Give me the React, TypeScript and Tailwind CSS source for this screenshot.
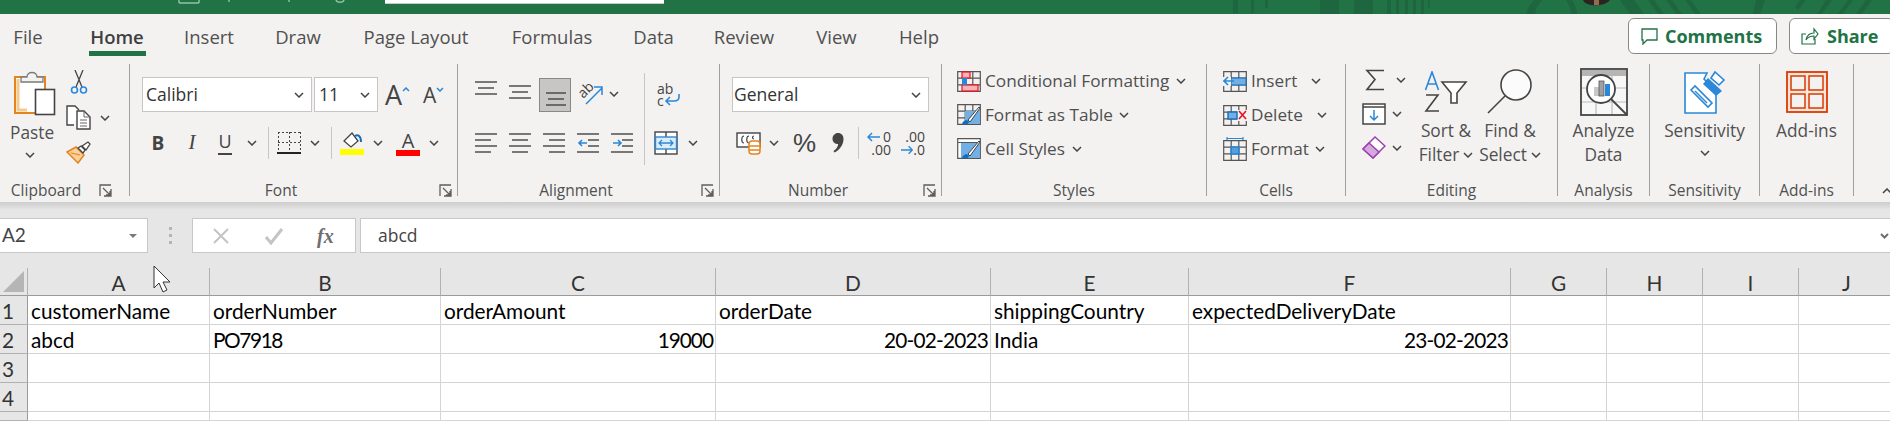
import React from "react";

const UI = "font-['Open_Sans',sans-serif]";
const CELL = "font-['Lato',sans-serif]";

function Chev({ className = "" }: { className?: string }) {
  return (
    <svg width="10" height="6" viewBox="0 0 10 6" className={`shrink-0 ${className}`}>
      <path d="M1 1l4 4 4-4" fill="none" stroke="#444" strokeWidth="1.5" />
    </svg>
  );
}

function Launcher() {
  return (
    <svg width="13" height="13" viewBox="0 0 13 13" className="shrink-0">
      <path d="M1 12V1h11M12 5v7H5M4 4l7 7M11 7v4H7" fill="none" stroke="#605e5c" strokeWidth="1.3" />
    </svg>
  );
}

function Group({ width, label, launcher, labelPad = "", children }: { width: string; label: string; launcher?: boolean; labelPad?: string; children: React.ReactNode }) {
  return (
    <div className={`${width} shrink-0 h-[132px] flex flex-col border-r border-[#a19f9d]`}>
      <div className="h-[120px] flex">{children}</div>
      <div className={`h-[12px] flex items-center ${labelPad}`}>
        <span className="flex-1 text-center text-[15.5px] leading-[16px] text-[#505050]">{label}</span>
        {launcher && <span className="w-[25px] pr-[5px] flex justify-end"><Launcher /></span>}
      </div>
    </div>
  );
}

function Lines({ widths, blue }: { widths: [number, number][]; blue?: "left" | "right" }) {
  return (
    <svg width="23" height="23" viewBox="0 0 23 23" className="shrink-0">
      {widths.map(([x, w], i) => (
        <path key={i} d={`M${x} ${2 + i * 6}h${w}`} stroke="#444" strokeWidth="1.4" />
      ))}
      {blue === "left" && <path d="M10 11H2m3-3l-3 3 3 3" fill="none" stroke="#2b88d8" strokeWidth="1.6" />}
      {blue === "right" && <path d="M2 11h8m-3-3l3 3-3 3" fill="none" stroke="#2b88d8" strokeWidth="1.6" />}
    </svg>
  );
}

function PasteIcon() {
  return (
    <svg width="42" height="46" viewBox="0 0 42 46" className="shrink-0">
      <rect x="1" y="7" width="30" height="36" fill="#fff" stroke="#e3851e" strokeWidth="2" />
      <path d="M4 9v31h9" fill="none" stroke="#f6c98c" strokeWidth="3" />
      <path d="M7 12V7h6c0-6 10-6 10 0h6v5z" fill="#f3f2f1" stroke="#7a7a7a" strokeWidth="1.3" />
      <rect x="21.5" y="19.5" width="19" height="25" fill="#fff" stroke="#444" strokeWidth="1.6" />
    </svg>
  );
}

function Scissors() {
  return (
    <svg width="18" height="25" viewBox="0 0 18 25" className="shrink-0">
      <path d="M5 0l7 17M13 0L6 17" stroke="#444" strokeWidth="1.3" fill="none" />
      <circle cx="4.5" cy="20" r="3" fill="none" stroke="#2b88d8" strokeWidth="1.6" />
      <circle cx="13.5" cy="20" r="3" fill="none" stroke="#2b88d8" strokeWidth="1.6" />
    </svg>
  );
}

function CopyIcon() {
  return (
    <svg width="25" height="25" viewBox="0 0 25 25" className="shrink-0">
      <path d="M8 20H1V1h8l4 4" fill="#fff" stroke="#444" strokeWidth="1.4" />
      <path d="M11 6h7l6 6v12H11z" fill="#fff" stroke="#444" strokeWidth="1.4" />
      <path d="M14 15h7M14 18h7M14 21h7M18 6v6h6" fill="none" stroke="#666" strokeWidth="1" />
    </svg>
  );
}

function BrushIcon() {
  return (
    <svg width="25" height="23" viewBox="0 0 25 23" className="shrink-0">
      <path d="M1 11l9-5 8 8-6 8z" fill="#fbd09a" stroke="#e3851e" strokeWidth="1.5" />
      <path d="M5 12l9 2" stroke="#e3851e" strokeWidth="1.2" />
      <path d="M12 7l3-2 4 4-2 3zM16 5l6-4 2 2-4 6z" fill="#fff" stroke="#444" strokeWidth="1.3" />
    </svg>
  );
}

function FillIcon() {
  return (
    <svg width="24" height="25" viewBox="0 0 24 25" className="shrink-0">
      <path d="M4 10l8-8 6 8-7 6z" fill="#fff" stroke="#444" strokeWidth="1.3" />
      <path d="M15 5c3-2 6 0 6 6" fill="none" stroke="#106ebe" strokeWidth="2" />
      <rect x="0" y="18" width="24" height="6" fill="#ffff00" />
    </svg>
  );
}

function BordersIcon() {
  return (
    <svg width="24" height="24" viewBox="0 0 24 24" className="shrink-0" shapeRendering="crispEdges">
      <path d="M1 1h22M1 1v20M23 1v20M12 1v20M1 11h22" fill="none" stroke="#444" strokeWidth="1" strokeDasharray="2 2" />
      <path d="M0 22h24" stroke="#222" strokeWidth="2" />
    </svg>
  );
}

function OrientIcon() {
  return (
    <span className="relative w-[27px] h-[24px] block shrink-0">
      <span className="block -rotate-45 w-[18px] text-[14px] leading-[14px] text-[#444]">ab</span>
      <svg width="27" height="24" viewBox="0 0 27 24" className="absolute inset-0">
        <path d="M9 22L25 6M17 5h8v8" fill="none" stroke="#2b88d8" strokeWidth="1.5" />
      </svg>
    </span>
  );
}

function WrapIcon() {
  return (
    <span className="relative w-[24px] h-[24px] flex flex-col shrink-0 text-[14px] leading-[12px] text-[#444]">
      <span>ab</span>
      <span>c</span>
      <svg width="24" height="24" viewBox="0 0 24 24" className="absolute inset-0">
        <path d="M22 11v3c0 3-2 4-5 4H10m3-4l-4 4 4 4" fill="none" stroke="#2b88d8" strokeWidth="1.6" />
      </svg>
    </span>
  );
}

function MergeIcon() {
  return (
    <svg width="24" height="24" viewBox="0 0 24 24" className="shrink-0">
      <rect x="1" y="1" width="22" height="22" fill="#fff" stroke="#444" strokeWidth="1.4" />
      <path d="M12 1v5M12 18v5" stroke="#444" strokeWidth="1.4" />
      <rect x="1.5" y="6" width="21" height="12" fill="#dcecf9" stroke="#2b88d8" strokeWidth="1.4" />
      <path d="M5 12h14M8 9l-3 3 3 3M16 9l3 3-3 3" fill="none" stroke="#2b88d8" strokeWidth="1.3" />
    </svg>
  );
}

function AccountingIcon() {
  return (
    <svg width="25" height="24" viewBox="0 0 25 24" className="shrink-0">
      <rect x="1" y="2" width="23" height="14" fill="#fff" stroke="#444" strokeWidth="1.4" />
      <path d="M8 5c-3 0-3 7 0 7M13 5c-3 0-3 7 0 7M18 5c-2 0-2 3 0 3" fill="none" stroke="#444" strokeWidth="1.2" />
      <rect x="13" y="10" width="11" height="13" rx="3" fill="#fff" stroke="#e3851e" strokeWidth="1.5" />
      <path d="M13 15h11M13 19h11" stroke="#e3851e" strokeWidth="1.3" />
    </svg>
  );
}

function CommaIcon() {
  return (
    <svg width="12" height="20" viewBox="0 0 12 20" className="shrink-0">
      <path d="M6 0c3.500 0 5.500 2.500 5.500 6 0 6-4 11-9 13.500L1.500 18c3-2 4.500-4.500 4.700-7C3 11 .5 9 .5 5.700.5 2.500 3 0 6 0z" fill="#444" />
    </svg>
  );
}

function DecimalIcon({ inc }: { inc?: boolean }) {
  return (
    <span className="w-[24px] h-[26px] flex flex-col shrink-0 text-[14px] leading-[13px] text-[#444] text-right">
      {inc ? (
        <>
          <span className="flex justify-between items-center h-[13px]">
            <svg width="13" height="10" viewBox="0 0 13 10"><path d="M13 5H1m4-4L1 5l4 4" fill="none" stroke="#2b88d8" strokeWidth="1.5" /></svg>
            <span>0</span>
          </span>
          <span className="h-[13px]">.00</span>
        </>
      ) : (
        <>
          <span className="h-[13px]">.00</span>
          <span className="flex justify-between items-center h-[13px]">
            <svg width="13" height="10" viewBox="0 0 13 10"><path d="M0 5h12M8 1l4 4-4 4" fill="none" stroke="#2b88d8" strokeWidth="1.5" /></svg>
            <span>.0</span>
          </span>
        </>
      )}
    </span>
  );
}

function TableGrid() {
  return <path d="M.7.7h22.6v19.6H.7zM.7 7.2h22.6M.7 13.8h22.6M8.2.7v19.6M15.8.7v19.6" fill="none" stroke="#555" strokeWidth="1.2" />;
}

function CondFormatIcon() {
  return (
    <svg width="24" height="21" viewBox="0 0 24 21" className="shrink-0">
      <TableGrid />
      <rect x="5" y="1" width="8" height="6" fill="#f8b4b4" stroke="#e81123" strokeWidth="1.2" />
      <rect x="5" y="14" width="16" height="6" fill="#f8b4b4" stroke="#e81123" strokeWidth="1.2" />
      <rect x="5" y="7" width="5" height="7" fill="#2b88d8" />
    </svg>
  );
}

function TableBrush() {
  return (
    <>
      <path d="M5 20c1-3 3-4 5-4l2 2c0 2-3 3-7 2z" fill="#106ebe" />
      <path d="M11 16l11-13 1 1-10 14z" fill="#fff" stroke="#444" strokeWidth="1" />
    </>
  );
}

function FormatTableIcon() {
  return (
    <svg width="24" height="22" viewBox="0 0 24 22" className="shrink-0">
      <TableGrid />
      <rect x="8" y="7" width="15" height="13" fill="#71afe5" />
      <TableBrush />
    </svg>
  );
}

function CellStylesIcon() {
  return (
    <svg width="24" height="22" viewBox="0 0 24 22" className="shrink-0">
      <path d="M.7.7h22.6v19.6H.7zM.7 4.500h22.6" fill="#fff" stroke="#555" strokeWidth="1.2" />
      <rect x="4" y="5" width="19" height="15" fill="#71afe5" />
      <TableBrush />
    </svg>
  );
}

function InsertIcon() {
  return (
    <svg width="24" height="21" viewBox="0 0 24 21" className="shrink-0">
      <TableGrid />
      <rect x="8" y="7" width="15" height="7" fill="#71afe5" stroke="#106ebe" />
      <rect x="0" y="6" width="8" height="9" fill="#f3f2f1" />
      <path d="M11 10H1m4-4l-4 4 4 4" fill="none" stroke="#2b88d8" strokeWidth="1.6" />
    </svg>
  );
}

function DeleteIcon() {
  return (
    <svg width="24" height="21" viewBox="0 0 24 21" className="shrink-0">
      <TableGrid />
      <rect x="14" y="5" width="10" height="11" fill="#f3f2f1" />
      <rect x="5" y="7" width="9" height="7" fill="#71afe5" stroke="#106ebe" strokeWidth="1.4" />
      <path d="M16 6l7 8M23 6l-7 8" stroke="#e81123" strokeWidth="1.6" />
    </svg>
  );
}

function FormatCellIcon() {
  return (
    <svg width="24" height="24" viewBox="0 0 24 24" className="shrink-0">
      <g transform="translate(0 3)"><TableGrid /><rect x="7" y="6" width="10" height="9" fill="#2b88d8" opacity=".8" /></g>
      <path d="M4 1.500h16M4 0v3M20 0v3" fill="none" stroke="#2b88d8" strokeWidth="1.2" />
    </svg>
  );
}

function SigmaIcon() {
  return (
    <svg width="20" height="23" viewBox="0 0 20 23" className="shrink-0">
      <path d="M19 1.500H2l8 9-8 10h17" fill="none" stroke="#444" strokeWidth="1.6" />
    </svg>
  );
}

function FillDownIcon() {
  return (
    <svg width="24" height="22" viewBox="0 0 24 22" className="shrink-0">
      <rect x="1" y="1" width="22" height="20" fill="#fff" stroke="#444" strokeWidth="1.5" />
      <path d="M1 4h22" stroke="#444" strokeWidth="1.5" />
      <path d="M12 7v10M8 13l4 4 4-4" fill="none" stroke="#2b88d8" strokeWidth="1.5" />
    </svg>
  );
}

function EraserIcon() {
  return (
    <svg width="24" height="24" viewBox="0 0 24 24" className="shrink-0">
      <path d="M1 13L13 1l10 9-12 12z" fill="#fff" stroke="#9c3fb0" strokeWidth="1.5" />
      <path d="M1 13l6-6 10 9-6 6z" fill="#d6a9de" stroke="#9c3fb0" strokeWidth="1.5" />
    </svg>
  );
}

function SortIcon() {
  return (
    <svg width="44" height="42" viewBox="0 0 44 42" className="shrink-0">
      <path d="M1.500 19L8 1l6.500 18M4 13h8" fill="none" stroke="#2b88d8" strokeWidth="1.6" />
      <path d="M2 24h12L2 40h13" fill="none" stroke="#444" strokeWidth="1.6" />
      <path d="M18 11h24l-9 11v10h-6V22z" fill="#fff" stroke="#444" strokeWidth="1.6" />
    </svg>
  );
}

function FindIcon() {
  return (
    <svg width="46" height="46" viewBox="0 0 46 46" className="shrink-0">
      <circle cx="29" cy="16" r="15" fill="#fbfbfb" stroke="#444" strokeWidth="1.6" />
      <path d="M18 27L1 44" stroke="#444" strokeWidth="1.6" />
    </svg>
  );
}

function AnalyzeIcon() {
  return (
    <svg width="48" height="48" viewBox="0 0 48 48" className="shrink-0">
      <rect x="1" y="1" width="46" height="46" fill="#f7f7f7" stroke="#444" strokeWidth="1.8" />
      <rect x="2" y="2" width="44" height="6" fill="#b5b5b5" />
      <path d="M2 20h44M2 34h44M16 8v38M32 8v38" stroke="#bbb" strokeWidth="1.2" />
      <circle cx="21" cy="21" r="14" fill="#fff" stroke="#444" strokeWidth="1.8" />
      <path d="M31 31l16 16" stroke="#444" strokeWidth="1.8" />
      <rect x="14" y="19" width="5" height="9" fill="#c8c8c8" />
      <rect x="19" y="13" width="5" height="15" fill="#a0a0a0" stroke="#555" strokeWidth=".8" />
      <rect x="25" y="16" width="5" height="12" fill="#2b88d8" />
    </svg>
  );
}

function SensitivityIcon() {
  return (
    <svg width="42" height="44" viewBox="0 0 42 44" className="shrink-0">
      <path d="M1 3h22l-3 6 12 12v22H1z" fill="#fff" stroke="#2b88d8" strokeWidth="1.6" />
      <path d="M7 20l4-4 17 17-4 4z" fill="#fff" stroke="#2b88d8" strokeWidth="1.6" />
      <path d="M11 21l12 12" stroke="#2b88d8" strokeWidth="1.4" />
      <path d="M19 14l5-6 14 13-6 5z" fill="#2b88d8" />
      <path d="M27 8l4-6 9 8-5 5z" fill="#fff" stroke="#2b88d8" strokeWidth="1.6" />
    </svg>
  );
}

function AddinsIcon() {
  return (
    <svg width="42" height="42" viewBox="0 0 42 42" className="shrink-0">
      <rect x="1" y="1" width="40" height="40" fill="#f9e5dd" stroke="#d83b01" strokeWidth="1.8" />
      <rect x="5" y="5" width="14" height="14" fill="#f3f2f1" stroke="#d83b01" strokeWidth="1.500" />
      <rect x="23" y="5" width="14" height="14" fill="#f3f2f1" stroke="#d83b01" strokeWidth="1.500" />
      <rect x="5" y="23" width="14" height="14" fill="#f3f2f1" stroke="#d83b01" strokeWidth="1.500" />
      <rect x="23" y="23" width="14" height="14" fill="#f3f2f1" stroke="#d83b01" strokeWidth="1.500" />
    </svg>
  );
}

function SelectBox({ width, value, pad = "pl-[3px]" }: { width: string; value: string; pad?: string }) {
  return (
    <div className={`${width} h-[35px] bg-white border border-[#c8c6c4] flex items-center justify-between ${pad} pr-[7px] shrink-0 text-[17.5px] text-[#333]`}>
      <span>{value}</span>
      <Chev />
    </div>
  );
}

function StyleRow({ icon, label, chevGap }: { icon: React.ReactNode; label: string; chevGap: string }) {
  return (
    <div className="h-[34px] flex items-center">
      <span className="w-[24px] flex justify-center">{icon}</span>
      <span className="ml-[4px] text-[17.2px] text-[#505050] whitespace-nowrap">{label}</span>
      <Chev className={chevGap} />
    </div>
  );
}

function BigButton({ width, icon, lines, chev }: { width: string; icon: React.ReactNode; lines: string[]; chev?: boolean }) {
  return (
    <div className={`${width} flex flex-col items-center pt-[3px] text-[17.3px] leading-[24px] text-[#505050]`}>
      <div className="h-[50px] flex items-center justify-center">{icon}</div>
      <div className="mt-[2px] flex flex-col items-center whitespace-nowrap">
        {lines.map((l, i) => (
          <span key={l} className="flex items-center gap-[4px]">
            {l}
            {chev && i === lines.length - 1 && <Chev />}
          </span>
        ))}
      </div>
    </div>
  );
}

const tabs = [
  { label: "File", cls: "w-[56px]" },
  { label: "Home", cls: "w-[122px] font-semibold text-[#3f3f3f]", active: true },
  { label: "Insert", cls: "w-[62px]" },
  { label: "Draw", cls: "w-[116px]" },
  { label: "Page Layout", cls: "w-[120px]" },
  { label: "Formulas", cls: "w-[152px]" },
  { label: "Data", cls: "w-[51px]" },
  { label: "Review", cls: "w-[130px]" },
  { label: "View", cls: "w-[55px]" },
  { label: "Help", cls: "w-[110px]" },
];

const columns = ["A", "B", "C", "D", "E", "F", "G", "H", "I", "J"];

// Lato digits run wider than Calibri's, so number cells get tightened
const rows: { text: string; cls?: string }[][] = [
  [{ text: "customerName" }, { text: "orderNumber" }, { text: "orderAmount" }, { text: "orderDate" }, { text: "shippingCountry" }, { text: "expectedDeliveryDate" }, { text: "" }, { text: "" }, { text: "" }, { text: "" }],
  [
    { text: "abcd" },
    { text: "PO7918", cls: "tracking-[-1.4px]" },
    { text: "19000", cls: "justify-end tracking-[-1px]" },
    { text: "20-02-2023", cls: "justify-end tracking-[-0.8px]" },
    { text: "India" },
    { text: "23-02-2023", cls: "justify-end tracking-[-0.8px]" },
    { text: "" },
    { text: "" },
    { text: "" },
    { text: "" },
  ],
  Array.from({ length: 10 }, () => ({ text: "" })),
  Array.from({ length: 10 }, () => ({ text: "" })),
  Array.from({ length: 10 }, () => ({ text: "" })),
];

function TitleArt() {
  return (
    <svg width="1890" height="14" viewBox="0 0 1890 14" className="absolute inset-0">
      <g fill="none" stroke="#8fc3a6" strokeWidth="1.4">
        <path d="M179 3h20M179 0v3M199 0v3" />
        <path d="M229 0v2M289 0v2" />
        <path d="M336 0c1 3 7 3 8 0" />
      </g>
      <g fill="#1e6640">
        <path d="M1233 0h5v13h-5zM1251 0h3v13h-3zM1265 0h3v8h-3zM1320 0h19v14h-19zM1354 0h19v14h-19zM1387 0h4v14h-4zM1396 0h3v14h-3zM1405 0h3v14h-3zM1413 0h3v14h-3zM1421 0h3v14h-3zM1428 0h2v8h-2z" />
        <path d="M1526 14c2-8 6-12 9-14h8c-4 3-7 8-8 14zM1566 0h6c3 4 5 9 5 14h-6c0-5-2-10-5-14z" />
        <path d="M1620 0h14l10 14h-14zM1648 0h6l10 14h-6zM1666 0h6l10 14h-6zM1685 0h6l10 14h-6zM1753 14l3-14h9l-5 14z" />
        <path d="M1795 7l5-7h6l-8 10zM1817 14l9-14h6l-10 14zM1838 14l10-14h5l-10 14zM1856 14l10-14h6l-10 14z" />
      </g>
      <path d="M1583 0c2 7 22 7 27 0z" fill="#2c2420" />
      <rect x="1594" y="0" width="5" height="5" fill="#9a6a4d" />
      <rect x="385" y="0" width="279" height="3" fill="#fff" />
      <rect x="385" y="3" width="279" height="1" fill="#bcd0c4" />
    </svg>
  );
}

function Ribbon() {
  return (
    <div className={`${UI} h-[188px] bg-[#f3f2f1] flex flex-col`}>
      <div className="h-[50px] flex items-start text-[18.5px] text-[#505050]">
        {tabs.map((t) => (
          <div key={t.label} className={`${t.cls} relative h-[42px] pt-[4px] flex items-center justify-center`}>
            {t.label}
            {t.active && <span className="absolute left-[33px] bottom-0 w-[57px] h-[5px] bg-[#217346]" />}
          </div>
        ))}
        <div className="ml-auto mt-[4px] flex gap-[12px] -mr-[4px]">
          <div className="w-[149px] h-[36px] bg-white border border-[#8a8886] rounded-[6px] flex items-center pl-[12px] gap-[7px] text-[#217346] font-bold text-[18px]">
            <svg width="17" height="17" viewBox="0 0 17 17"><path d="M1 1h15v11H6l-4 4v-4H1z" fill="none" stroke="#217346" strokeWidth="1.3" /></svg>
            Comments
          </div>
          <div className="w-[105px] h-[36px] bg-white border border-[#8a8886] rounded-[6px] flex items-center pl-[11px] gap-[8px] text-[#217346] font-bold text-[18px]">
            <svg width="18" height="18" viewBox="0 0 18 18"><path d="M5 7H1v10h13v-5M5 13c1-5 4-7 8-7V2l4 5-4 5V9c-3 0-6 1-8 4z" fill="none" stroke="#217346" strokeWidth="1.2" /></svg>
            Share
          </div>
        </div>
      </div>
      <div className="h-[132px] flex">
        <Group width="w-[130px]" label="Clipboard" launcher labelPad="pr-[12px]">
          <div className="w-[64px] pl-[14px] pt-[6px] flex flex-col items-start">
            <PasteIcon />
            <span className="-ml-[4px] mt-[5px] text-[17.3px] leading-[24px] text-[#505050]">Paste</span>
            <Chev className="ml-[11px] mt-[7px]" />
          </div>
          <div className="flex flex-col pt-[6px]">
            <span className="ml-[6px] h-[36px]"><Scissors /></span>
            <span className="flex items-center h-[25px] ml-[2px] mt-[-1px]"><CopyIcon /><Chev className="ml-[9px]" /></span>
            <span className="ml-[2px] mt-[11px]"><BrushIcon /></span>
          </div>
        </Group>

        <Group width="w-[328px]" label="Font" launcher>
          <div className="flex flex-col pt-[13px]">
            <div className="flex items-center ml-[12px]">
              <SelectBox width="w-[170px]" value="Calibri" />
              <SelectBox width="w-[64px] ml-[2px]" value="11" pad="pl-[4px]" />
              <span className="ml-[7px] text-[27px] leading-[30px] text-[#444]">A</span>
              <svg width="8" height="5" viewBox="0 0 8 5" className="-mt-[10px]"><path d="M1 4l3-3 3 3" fill="none" stroke="#2b88d8" strokeWidth="1.5" /></svg>
              <span className="ml-[13px] text-[21px] leading-[30px] text-[#444]">A</span>
              <svg width="8" height="5" viewBox="0 0 8 5" className="-mt-[10px]"><path d="M1 1l3 3 3-3" fill="none" stroke="#2b88d8" strokeWidth="1.5" /></svg>
            </div>
            <div className="flex items-center ml-[21px] mt-[15px] h-[32px]">
              <span className="w-[14px] text-[19px] font-bold text-[#444] text-center">B</span>
              <span className="ml-[21px] w-[12px] font-['Liberation_Serif',serif] italic text-[21px] text-[#444] text-center">I</span>
              <span className="ml-[19px] w-[16px] h-[24px] flex flex-col items-center text-[18px] leading-[20px] text-[#444]">U<span className="w-[14px] h-[1.5px] mt-[2px] bg-[#444]" /></span>
              <Chev className="ml-[14px]" />
              <span className="ml-[11px] w-px h-[32px] bg-[#c8c6c4]" />
              <span className="ml-[8px]"><BordersIcon /></span>
              <Chev className="ml-[9px]" />
              <span className="ml-[11px] w-px h-[32px] bg-[#c8c6c4]" />
              <span className="ml-[8px]"><FillIcon /></span>
              <Chev className="ml-[9px]" />
              <span className="ml-[13px] w-[24px] h-[25px] flex flex-col items-center text-[20px] leading-[19px] text-[#444]">A<span className="w-[24px] h-[6px] bg-[#ff0000]" /></span>
              <Chev className="ml-[9px]" />
            </div>
          </div>
        </Group>

        <Group width="w-[262px]" label="Alignment" launcher>
          <div className="flex flex-col pt-[14px]">
            <div className="flex items-start ml-[17px] h-[34px]">
              <span className="mt-[2px]"><Lines widths={[[0, 22], [3, 16], [0, 22]]} /></span>
              <span className="ml-[11px] mt-[6px]"><Lines widths={[[0, 22], [3, 16], [0, 22]]} /></span>
              <span className="ml-[7px] w-[32px] h-[34px] bg-[#c8c6c4] border border-[#8a8886] flex items-start justify-center pt-[12px]">
                <Lines widths={[[2, 20], [4, 16], [2, 20]]} />
              </span>
              <span className="ml-[6px] mt-[4px]"><OrientIcon /></span>
              <Chev className="ml-[5px] mt-[13px]" />
            </div>
            <div className="flex items-center ml-[17px] mt-[18px] h-[26px] gap-[11px]">
              <Lines widths={[[0, 22], [0, 16], [0, 22], [0, 16]]} />
              <Lines widths={[[0, 22], [3, 16], [0, 22], [3, 16]]} />
              <Lines widths={[[0, 22], [6, 16], [0, 22], [6, 16]]} />
              <Lines widths={[[0, 22], [11, 11], [11, 11], [0, 22]]} blue="left" />
              <Lines widths={[[0, 22], [11, 11], [11, 11], [0, 22]]} blue="right" />
            </div>
          </div>
          <span className="ml-[10px] mt-[9px] w-px h-[92px] bg-[#c8c6c4]" />
          <div className="flex flex-col pt-[19px] ml-[12px]">
            <WrapIcon />
            <span className="flex items-center mt-[24px] -ml-[3px]"><MergeIcon /><Chev className="ml-[10px]" /></span>
          </div>
        </Group>

        <Group width="w-[222px]" label="Number" launcher>
          <div className="flex flex-col pt-[13px] pl-[12px]">
            <SelectBox width="w-[197px]" value="General" pad="pl-[1px]" />
            <div className="flex items-center mt-[15px] h-[32px]">
              <span className="ml-[4px]"><AccountingIcon /></span>
              <Chev className="ml-[8px]" />
              <span className="ml-[14px] w-[24px] text-[26px] leading-[28px] text-[#444] font-['Liberation_Sans',sans-serif]">%</span>
              <span className="ml-[15px]"><CommaIcon /></span>
              <span className="ml-[14px] w-px h-[32px] bg-[#c8c6c4]" />
              <span className="ml-[8px]"><DecimalIcon inc /></span>
              <span className="ml-[10px]"><DecimalIcon /></span>
            </div>
          </div>
        </Group>

        <Group width="w-[265px]" label="Styles">
          <div className="flex flex-col pl-[15px]">
            <StyleRow icon={<CondFormatIcon />} label="Conditional Formatting" chevGap="ml-[7px]" />
            <StyleRow icon={<FormatTableIcon />} label="Format as Table" chevGap="ml-[6px]" />
            <StyleRow icon={<CellStylesIcon />} label="Cell Styles" chevGap="ml-[7px]" />
          </div>
        </Group>

        <Group width="w-[139px]" label="Cells">
          <div className="flex flex-col pl-[16px]">
            <StyleRow icon={<InsertIcon />} label="Insert" chevGap="ml-[14px]" />
            <StyleRow icon={<DeleteIcon />} label="Delete" chevGap="ml-[14px]" />
            <StyleRow icon={<FormatCellIcon />} label="Format" chevGap="ml-[6px]" />
          </div>
        </Group>

        <Group width="w-[212px]" label="Editing">
          <div className="w-[67px] flex flex-col pl-[16px] -mt-[1px]">
            <span className="flex items-center h-[34px]"><span className="ml-[3px]"><SigmaIcon /></span><Chev className="ml-[11px]" /></span>
            <span className="flex items-center h-[34px]"><FillDownIcon /><Chev className="ml-[6px]" /></span>
            <span className="flex items-center h-[34px]"><EraserIcon /><Chev className="ml-[6px]" /></span>
          </div>
          <BigButton width="w-[66px]" icon={<SortIcon />} lines={["Sort &", "Filter"]} chev />
          <BigButton width="w-[62px]" icon={<FindIcon />} lines={["Find &", "Select"]} chev />
        </Group>

        <Group width="w-[92px]" label="Analysis">
          <BigButton width="w-full" icon={<AnalyzeIcon />} lines={["Analyze", "Data"]} />
        </Group>

        <Group width="w-[110px]" label="Sensitivity">
          <div className="w-full flex flex-col items-center pt-[3px] text-[17.3px] leading-[24px] text-[#505050]">
            <div className="h-[50px] flex items-center justify-center"><SensitivityIcon /></div>
            <span className="mt-[2px]">Sensitivity</span>
            <Chev className="mt-[7px]" />
          </div>
        </Group>

        <Group width="w-[94px]" label="Add-ins">
          <BigButton width="w-full" icon={<AddinsIcon />} lines={["Add-ins"]} />
        </Group>

        <div className="flex-1 flex justify-end items-end pb-[2px] -mr-[1px]">
          <svg width="9" height="6" viewBox="0 0 9 6"><path d="M1 5l4-4 4 4" fill="none" stroke="#444" strokeWidth="1.5" /></svg>
        </div>
      </div>
      <div className="h-[6px]" />
    </div>
  );
}

function FormulaBar() {
  return (
    <div className={`${UI} h-[66px] shrink-0 flex flex-col`}>
      <div className="h-[16px] shrink-0 bg-gradient-to-b from-[#cdcdcd] to-[#e6e6e6] to-50%" />
      <div className="flex items-start">
        <div className="w-[148px] h-[35px] bg-white border border-[#c8c8c8] border-l-0 flex items-center justify-between pl-[2px] pr-[10px] text-[#444] font-['Lato',sans-serif] shrink-0">
          <span className="text-[19px]">A2</span>
          <span className="w-0 h-0 border-x-[4px] border-x-transparent border-t-[4px] border-t-[#7a7a7a]" />
        </div>
        <div className="w-[44px] h-[35px] flex flex-col items-center justify-center gap-[4px]">
          <span className="w-[3px] h-[3px] bg-[#b5b5b5]" />
          <span className="w-[3px] h-[3px] bg-[#b5b5b5]" />
          <span className="w-[3px] h-[3px] bg-[#b5b5b5]" />
        </div>
        <div className="w-[164px] h-[35px] bg-white border border-[#c8c8c8] flex items-center shrink-0">
          <svg width="18" height="18" viewBox="0 0 18 18" className="ml-[19px]"><path d="M2 2l14 14M16 2L2 16" stroke="#c4c4c4" strokeWidth="2" /></svg>
          <svg width="20" height="18" viewBox="0 0 20 18" className="ml-[34px]"><path d="M2 10l5 6L18 2" fill="none" stroke="#c4c4c4" strokeWidth="3" /></svg>
          <span className="ml-[33px] font-['Liberation_Serif',serif] italic font-bold text-[20px] text-[#6e6e6e]">fx</span>
        </div>
        <div className="ml-[4px] flex-1 h-[35px] bg-white border border-[#c8c8c8] border-r-0 flex items-center justify-between pl-[17px] pr-[1px]">
          <span className="text-[17.5px] text-[#444]">abcd</span>
          <svg width="9" height="6" viewBox="0 0 9 6"><path d="M1 1l3.500 3.500L8 1" fill="none" stroke="#6e6e6e" strokeWidth="2" /></svg>
        </div>
      </div>
    </div>
  );
}

function Sheet() {
  return (
    <div className={`${CELL} relative flex-1`}>
      <div className="w-[1895px] grid grid-cols-[28px_182px_231px_275px_275px_198px_322px_96px_96px_96px_96px] grid-rows-[28px_29px_29px_29px_29px_9px] text-[20.8px] text-black">
        <div className="bg-[#e6e6e6] border-b border-[#9b9b9b] border-r border-r-[#b1b1b1] flex items-end pl-[3px] pb-[3px]">
          <svg width="21" height="21" viewBox="0 0 21 21"><path d="M21 0v21H0z" fill="#b5b5b5" /></svg>
        </div>
        {columns.map((c) => (
          <div key={c} className="bg-[#e6e6e6] border-b border-[#9b9b9b] border-r border-r-[#b1b1b1] pt-[3px] flex items-center justify-center text-[#333]">{c}</div>
        ))}
        {rows.map((row, i) => (
          <React.Fragment key={i}>
            <div className="bg-[#e6e6e6] border-b border-[#b1b1b1] border-r border-r-[#9b9b9b] pl-[2px] pt-[2px] flex items-center text-[#333]">{i < 4 ? i + 1 : ""}</div>
            {row.map((cell, j) => (
              <div key={j} className={`bg-white border-b border-r border-[#d4d4d4] flex items-center pl-[3px] pr-[2px] pt-[2px] whitespace-nowrap ${cell.cls ?? ""}`}>{cell.text}</div>
            ))}
          </React.Fragment>
        ))}
      </div>
      <svg width="19" height="28" viewBox="0 0 19 28" className="absolute left-[153px] -top-[3px]">
        <path d="M1 1v22l5-5 4 9 4-2-4-8h7z" fill="#fff" stroke="#333" strokeWidth="1" />
      </svg>
    </div>
  );
}

export default function App() {
  return (
    <div className="w-[1890px] h-[421px] overflow-hidden flex flex-col bg-[#e6e6e6]">
      <div className="relative h-[14px] bg-[#217346] shrink-0"><TitleArt /></div>
      <Ribbon />
      <FormulaBar />
      <Sheet />
    </div>
  );
}
